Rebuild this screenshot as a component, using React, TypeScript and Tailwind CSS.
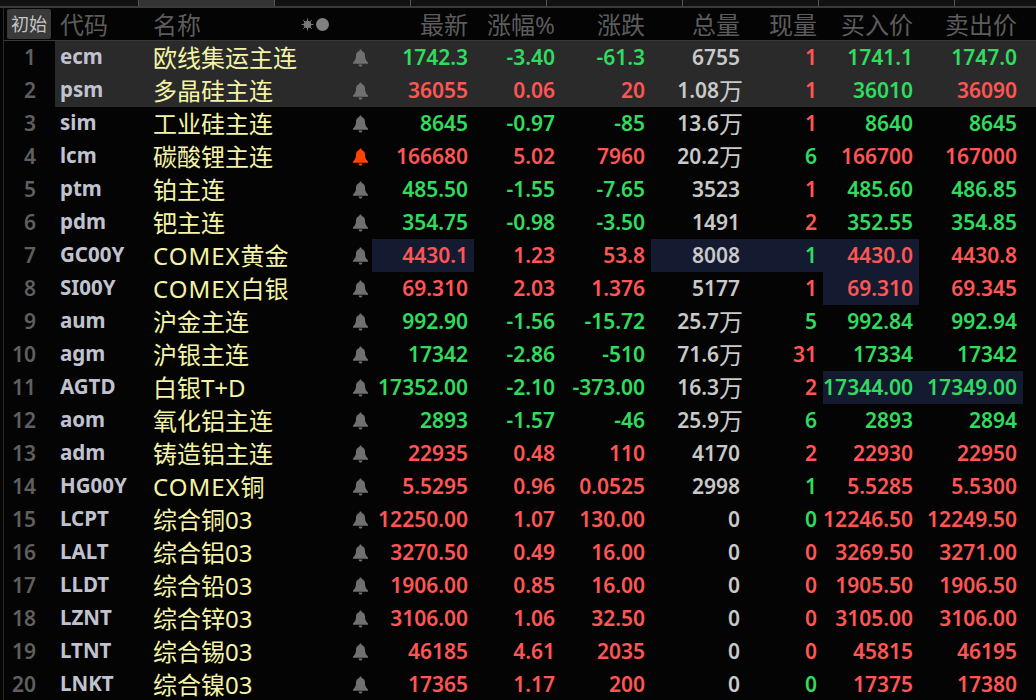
const green = 'text-[#2fdc5f]';
const red = 'text-[#ff5555]';

type Row = {
  code: string;
  name: string;
  last: string;
  pct: string;
  chg: string;
  total: string;
  wan?: boolean;
  now: string;
  bid: string;
  ask: string;
  up: boolean;
  nowUp: boolean;
  bidUp: boolean;
  askUp: boolean;
  alarm?: boolean;
};

const rows: Row[] = [
  { code: 'ecm', name: '欧线集运主连', last: '1742.3', pct: '-3.40', chg: '-61.3', total: '6755', now: '1', bid: '1741.1', ask: '1747.0', up: false, nowUp: true, bidUp: false, askUp: false },
  { code: 'psm', name: '多晶硅主连', last: '36055', pct: '0.06', chg: '20', total: '1.08', wan: true, now: '1', bid: '36010', ask: '36090', up: true, nowUp: true, bidUp: false, askUp: true },
  { code: 'sim', name: '工业硅主连', last: '8645', pct: '-0.97', chg: '-85', total: '13.6', wan: true, now: '1', bid: '8640', ask: '8645', up: false, nowUp: true, bidUp: false, askUp: false },
  { code: 'lcm', name: '碳酸锂主连', last: '166680', pct: '5.02', chg: '7960', total: '20.2', wan: true, now: '6', bid: '166700', ask: '167000', up: true, nowUp: false, bidUp: true, askUp: true, alarm: true },
  { code: 'ptm', name: '铂主连', last: '485.50', pct: '-1.55', chg: '-7.65', total: '3523', now: '1', bid: '485.60', ask: '486.85', up: false, nowUp: true, bidUp: false, askUp: false },
  { code: 'pdm', name: '钯主连', last: '354.75', pct: '-0.98', chg: '-3.50', total: '1491', now: '2', bid: '352.55', ask: '354.85', up: false, nowUp: true, bidUp: false, askUp: false },
  { code: 'GC00Y', name: 'COMEX黄金', last: '4430.1', pct: '1.23', chg: '53.8', total: '8008', now: '1', bid: '4430.0', ask: '4430.8', up: true, nowUp: false, bidUp: true, askUp: true },
  { code: 'SI00Y', name: 'COMEX白银', last: '69.310', pct: '2.03', chg: '1.376', total: '5177', now: '1', bid: '69.310', ask: '69.345', up: true, nowUp: true, bidUp: true, askUp: true },
  { code: 'aum', name: '沪金主连', last: '992.90', pct: '-1.56', chg: '-15.72', total: '25.7', wan: true, now: '5', bid: '992.84', ask: '992.94', up: false, nowUp: false, bidUp: false, askUp: false },
  { code: 'agm', name: '沪银主连', last: '17342', pct: '-2.86', chg: '-510', total: '71.6', wan: true, now: '31', bid: '17334', ask: '17342', up: false, nowUp: true, bidUp: false, askUp: false },
  { code: 'AGTD', name: '白银T+D', last: '17352.00', pct: '-2.10', chg: '-373.00', total: '16.3', wan: true, now: '2', bid: '17344.00', ask: '17349.00', up: false, nowUp: true, bidUp: false, askUp: false },
  { code: 'aom', name: '氧化铝主连', last: '2893', pct: '-1.57', chg: '-46', total: '25.9', wan: true, now: '6', bid: '2893', ask: '2894', up: false, nowUp: false, bidUp: false, askUp: false },
  { code: 'adm', name: '铸造铝主连', last: '22935', pct: '0.48', chg: '110', total: '4170', now: '2', bid: '22930', ask: '22950', up: true, nowUp: true, bidUp: true, askUp: true },
  { code: 'HG00Y', name: 'COMEX铜', last: '5.5295', pct: '0.96', chg: '0.0525', total: '2998', now: '1', bid: '5.5285', ask: '5.5300', up: true, nowUp: false, bidUp: true, askUp: true },
  { code: 'LCPT', name: '综合铜03', last: '12250.00', pct: '1.07', chg: '130.00', total: '0', now: '0', bid: '12246.50', ask: '12249.50', up: true, nowUp: false, bidUp: true, askUp: true },
  { code: 'LALT', name: '综合铝03', last: '3270.50', pct: '0.49', chg: '16.00', total: '0', now: '0', bid: '3269.50', ask: '3271.00', up: true, nowUp: true, bidUp: true, askUp: true },
  { code: 'LLDT', name: '综合铅03', last: '1906.00', pct: '0.85', chg: '16.00', total: '0', now: '0', bid: '1905.50', ask: '1906.50', up: true, nowUp: true, bidUp: true, askUp: true },
  { code: 'LZNT', name: '综合锌03', last: '3106.00', pct: '1.06', chg: '32.50', total: '0', now: '0', bid: '3105.00', ask: '3106.00', up: true, nowUp: true, bidUp: true, askUp: true },
  { code: 'LTNT', name: '综合锡03', last: '46185', pct: '4.61', chg: '2035', total: '0', now: '0', bid: '45815', ask: '46195', up: true, nowUp: true, bidUp: true, askUp: true },
  { code: 'LNKT', name: '综合镍03', last: '17365', pct: '1.17', chg: '200', total: '0', now: '0', bid: '17375', ask: '17380', up: true, nowUp: false, bidUp: true, askUp: true },
];

const cols = 'grid grid-cols-[51px_98px_193px_26px_102px_87px_90px_95px_77px_96px_104px_13px]';

const Bell = ({ on }: { on?: boolean }) => (
  <svg width="15" height="18" viewBox="0 0 15 18" className={on ? 'fill-[#ff4400]' : 'fill-[#707070]'}>
    <path d="M7.5 0.5c.7 0 1.1.5 1.2 1.4C11 2.5 12 4.2 12 6.6c0 2.4.4 4 1.6 5.4.6.7 1.4 1.1 1.4 1.7v1.1H0v-1.1c0-.6.8-1 1.4-1.7C2.6 10.6 3 9 3 6.6c0-2.4 1-4.1 3.3-4.7C6.4 1 6.8.5 7.5.5z" />
    <path d="M5.6 15.4h3.8c0 1.2-.8 2.1-1.9 2.1s-1.9-.9-1.9-2.1z" />
  </svg>
);

const Num = ({ value, className, bg }: { value: string; className: string; bg?: boolean }) => (
  <div className={`flex items-center justify-end pr-[6px] ${className} ${bg ? 'bg-[#141b30]' : ''}`}>{value}</div>
);

const Name = ({ value }: { value: string }) => {
  // COMEX prints wider in the picture than the Noto latin does
  if (value.startsWith('COMEX')) {
    return (
      <>
        <span className="tracking-[1px]">COMEX</span>
        {value.slice(5)}
      </>
    );
  }
  return <>{value}</>;
};

const App = () => {
  return (
    <div className="h-[700px] w-[1036px] overflow-hidden bg-[#040404] font-['Noto_Sans','Noto_Sans_CJK_SC',sans-serif]">
      {/* tab strip cut off at the top */}
      <div className="flex h-[8px] border-b-2 border-[#3a3a3a] bg-[#121212] pl-[3px]">
        <div className="w-[136px] border-r border-[#555]" />
        <div className="w-[136px] border-r border-[#555] bg-[#333]" />
        <div className="w-[136px] border-r border-[#555]" />
        <div className="w-[136px] border-r border-[#555]" />
        <div className="w-[136px] border-r border-[#555]" />
        <div className="w-[136px] border-r border-[#555]" />
        <div className="w-[136px] border-r border-[#555]" />
      </div>

      <div className="ml-[3px] border-l border-[#2a2a2a]">
        <div className={`${cols} h-[33px] grid-rows-[32px] border-b border-[#3a3a3a] text-[24px] font-normal leading-[34px] text-[#5c5c5c]`}>
          <div className="flex items-center pl-[3px]">
            <span className="flex h-[30px] w-[44px] items-center justify-center rounded-[2px] bg-[#3a3a3a] text-[18px] text-[#c4c4c4]">初始</span>
          </div>
          <div className="pl-[5px]">代码</div>
          <div className="relative">
            名称
            <span className="absolute left-[148px] top-[10px] flex items-center gap-[2px]">
              <svg width="13" height="13" viewBox="0 0 13 13" className="fill-[#777] stroke-[#777]">
                <circle cx="6.5" cy="6.5" r="3.8" stroke="none" />
                <path d="M6.5 0.5v12M0.5 6.5h12M2.3 2.3l8.4 8.4M10.7 2.3l-8.4 8.4" strokeWidth="1" />
              </svg>
              <span className="h-[13px] w-[13px] rounded-full bg-[#808080]" />
            </span>
          </div>
          <div />
          <div className="pr-[6px] text-right">最新</div>
          <div className="pr-[6px] text-right">涨幅%</div>
          <div className="pr-[6px] text-right">涨跌</div>
          <div className="pr-[6px] text-right">总量</div>
          <div className="pr-[6px] text-right">现量</div>
          <div className="pr-[6px] text-right">买入价</div>
          <div className="pr-[6px] text-right">卖出价</div>
          <div />
        </div>

        {rows.map((r, i) => (
          <div key={r.code} className={`${cols} h-[33px] text-[21px] font-semibold leading-[33px]`}>
            <div className="pr-[19px] text-right text-[#5f5f5f]">{i + 1}</div>
            <div className={`pl-[5px] text-[20.5px] font-bold leading-[31px] text-[#c0c3cf] ${i < 2 ? 'bg-[#2a2a2a]' : ''}`}>{r.code}</div>
            <div className={`whitespace-nowrap text-[24px] font-normal text-[#f4f4a6] ${i < 2 ? 'bg-[#2a2a2a]' : ''}`}>
              <Name value={r.name} />
            </div>
            <div className={`flex items-center pl-[7px] ${i < 2 ? 'bg-[#2a2a2a]' : ''}`}>
              <Bell on={r.alarm} />
            </div>
            <Num value={r.last} className={`${r.up ? red : green} ${i < 2 ? 'bg-[#2a2a2a]' : ''}`} bg={i === 6} />
            <Num value={r.pct} className={`${r.up ? red : green} ${i < 2 ? 'bg-[#2a2a2a]' : ''}`} />
            <Num value={r.chg} className={`${r.up ? red : green} ${i < 2 ? 'bg-[#2a2a2a]' : ''}`} />
            <div className={`flex items-center justify-end pr-[6px] text-[#c9c9c9] ${i === 6 ? 'bg-[#141b30]' : i < 2 ? 'bg-[#2a2a2a]' : ''}`}>
              {r.total}
              {r.wan && <span className="mr-[-3px] text-[24px] font-normal">万</span>}
            </div>
            <Num value={r.now} className={`${r.nowUp ? red : green} ${i < 2 ? 'bg-[#2a2a2a]' : ''}`} bg={i === 6} />
            <Num value={r.bid} className={`${r.bidUp ? red : green} ${i < 2 ? 'bg-[#2a2a2a]' : ''}`} bg={i === 6 || i === 7 || i === 10} />
            <Num value={r.ask} className={`${r.askUp ? red : green} ${i < 2 ? 'bg-[#2a2a2a]' : ''}`} bg={i === 10} />
            <div className={i < 2 ? 'bg-[#2a2a2a]' : ''} />
          </div>
        ))}
      </div>
    </div>
  );
};

export default App;
